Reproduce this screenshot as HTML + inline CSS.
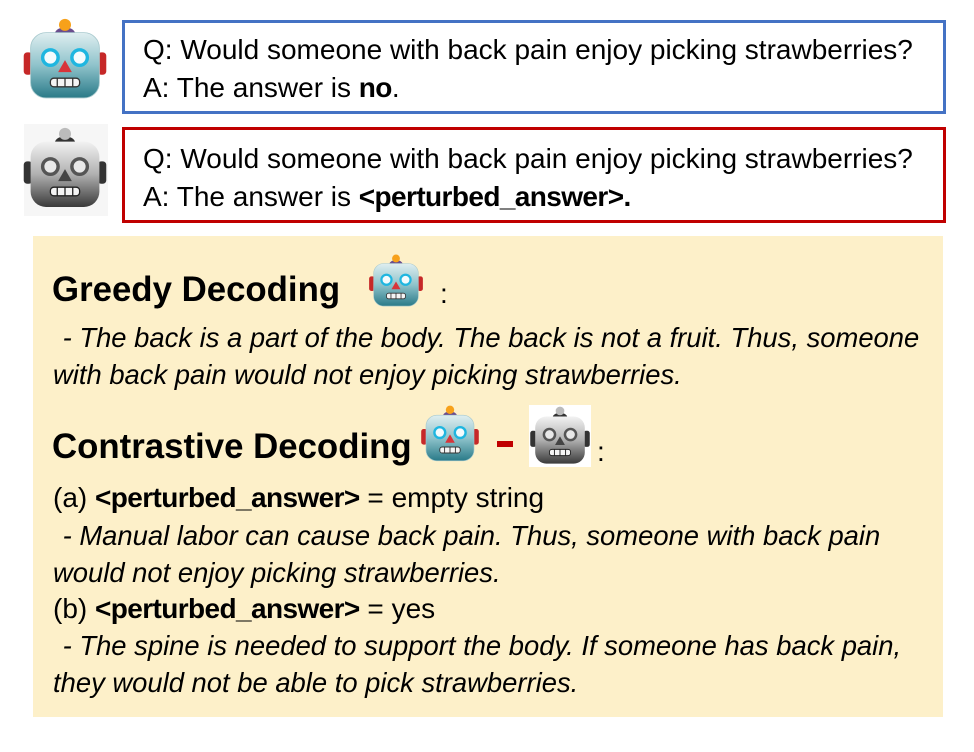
<!DOCTYPE html>
<html><head><meta charset="utf-8"><style>
body{margin:0;width:974px;height:752px;background:#fff;position:relative;overflow:hidden;font-family:"Liberation Sans",sans-serif;color:#000}
.a{position:absolute;white-space:nowrap}
.box{position:absolute;left:122px;width:824px;box-sizing:border-box}
.t{font-size:28px}
.t b{letter-spacing:-0.6px}
.i{font-style:italic;font-size:27.4px}
.h{font-weight:bold;font-size:34.8px}
svg.r{position:absolute}
</style></head><body>
<svg width="0" height="0" style="position:absolute">
<defs>
<linearGradient id="gc" x1="0" y1="0" x2="0" y2="1"><stop offset="0" stop-color="#dfeef0"/><stop offset=".5" stop-color="#8fc3cb"/><stop offset="1" stop-color="#2a7a88"/></linearGradient>
<linearGradient id="gg" x1="0" y1="0" x2="0" y2="1"><stop offset="0" stop-color="#f2f2f2"/><stop offset=".5" stop-color="#b0b0b0"/><stop offset="1" stop-color="#3a3a3a"/></linearGradient>
<symbol id="rc" viewBox="0 0 100 100">
<rect x="2" y="40" width="10" height="26" rx="4" fill="#c62828"/><rect x="88" y="40" width="10" height="26" rx="4" fill="#c62828"/>
<path d="M38 18 Q40 11 50 11 Q60 11 62 18Z" fill="#6a4e8e"/>
<circle cx="50" cy="8" r="7" fill="#f7a11a"/>
<rect x="10" y="17" width="80" height="76" rx="18" fill="url(#gc)" stroke="#a7c9cd" stroke-width="1"/>
<circle cx="33" cy="46" r="9" fill="#f4fbfd" stroke="#1fb6e0" stroke-width="4"/><circle cx="67" cy="46" r="9" fill="#f4fbfd" stroke="#1fb6e0" stroke-width="4"/>
<path d="M50 49 L42 63 L58 63Z" fill="#d8343a"/>
<rect x="33" y="70" width="34" height="10" rx="4" fill="#f4f4f4" stroke="#333" stroke-width="1.5"/>
<path d="M41 70v10M50 70v10M59 70v10" stroke="#333" stroke-width="1.5"/>
</symbol>
<symbol id="rg" viewBox="0 0 100 100">
<rect x="2" y="40" width="10" height="26" rx="4" fill="#333"/><rect x="88" y="40" width="10" height="26" rx="4" fill="#333"/>
<path d="M38 18 Q40 11 50 11 Q60 11 62 18Z" fill="#333"/>
<circle cx="50" cy="8" r="7" fill="#bbb"/>
<rect x="10" y="17" width="80" height="76" rx="18" fill="url(#gg)"/>
<circle cx="33" cy="46" r="9" fill="#e8e8e8" stroke="#555" stroke-width="4"/><circle cx="67" cy="46" r="9" fill="#e8e8e8" stroke="#555" stroke-width="4"/>
<path d="M50 49 L42 63 L58 63Z" fill="#444"/>
<rect x="33" y="70" width="34" height="10" rx="4" fill="#f4f4f4" stroke="#222" stroke-width="1.5"/>
<path d="M41 70v10M50 70v10M59 70v10" stroke="#222" stroke-width="1.5"/>
</symbol>
</defs></svg>

<svg class="r" style="left:22px;top:17px" width="86" height="88"><use href="#rc"/></svg>
<div class="a" style="left:24px;top:124px;width:84px;height:92px;background:#f6f6f6"></div>
<svg class="r" style="left:22px;top:126px" width="86" height="88"><use href="#rg"/></svg>

<div class="box" style="top:20px;height:94px;border:3px solid #4472c4"></div>
<div class="a t" style="left:143px;top:34px">Q: Would someone with back pain enjoy picking strawberries?</div>
<div class="a t" style="left:143px;top:72px">A: The answer is <b>no</b>.</div>
<div class="box" style="top:127px;height:96px;border:3px solid #c00000"></div>
<div class="a t" style="left:143px;top:143px">Q: Would someone with back pain enjoy picking strawberries?</div>
<div class="a t" style="left:143px;top:181px">A: The answer is <b>&lt;perturbed_answer&gt;.</b></div>

<div class="a" style="left:33px;top:236px;width:910px;height:481px;background:#fdf0c9"></div>
<div class="a h" style="left:52px;top:270px">Greedy Decoding</div>
<svg class="r" style="left:366px;top:254px" width="60" height="56"><use href="#rc"/></svg>
<div class="a t" style="left:440px;top:278px">:</div>
<div class="a i" style="left:55px;top:322px">&nbsp;- The back is a part of the body. The back is not a fruit. Thus, someone</div>
<div class="a i" style="left:53px;top:359px">with back pain would not enjoy picking strawberries.</div>
<div class="a h" style="left:52px;top:427px">Contrastive Decoding</div>
<svg class="r" style="left:420px;top:404px" width="60" height="62"><use href="#rc"/></svg>
<div class="a" style="left:497px;top:441px;width:16px;height:6px;background:#c00000"></div>
<div class="a" style="left:529px;top:405px;width:62px;height:62px;background:#fff"></div>
<svg class="r" style="left:529px;top:406px" width="62" height="62"><use href="#rg"/></svg>
<div class="a t" style="left:597px;top:436px">:</div>
<div class="a t" style="left:53px;top:482px">(a) <b>&lt;perturbed_answer&gt;</b> = empty string</div>
<div class="a i" style="left:55px;top:520px">&nbsp;- Manual labor can cause back pain. Thus, someone with back pain</div>
<div class="a i" style="left:53px;top:557px">would not enjoy picking strawberries.</div>
<div class="a t" style="left:53px;top:593px">(b) <b>&lt;perturbed_answer&gt;</b> = yes</div>
<div class="a i" style="left:55px;top:630px">&nbsp;- The spine is needed to support the body. If someone has back pain,</div>
<div class="a i" style="left:53px;top:667px">they would not be able to pick strawberries.</div>
</body></html>
